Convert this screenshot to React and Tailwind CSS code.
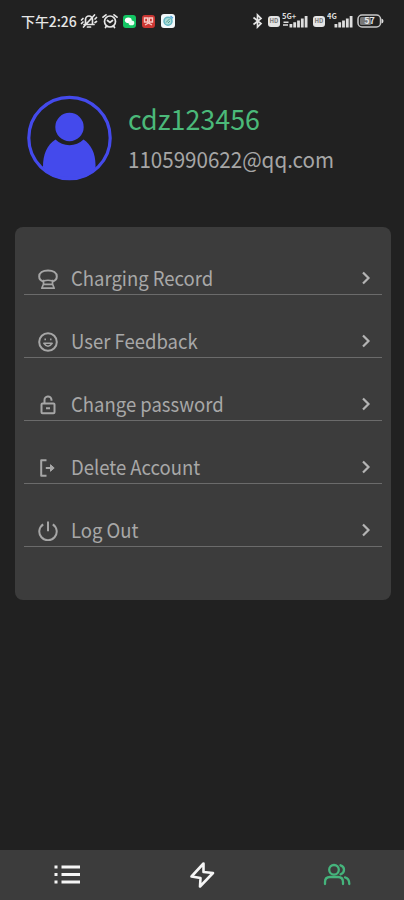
import React from "react";

const FONT = "font-['Noto_Sans_CJK_SC','Noto_Sans',sans-serif]";

function HdBadge() {
  return (
    <span className="flex h-[11px] w-[12px] items-center justify-center rounded-[3px] bg-[#e4e4e4] text-[6px] leading-none font-bold text-[#777]">
      HD
    </span>
  );
}

function Signal({ label, arrows, className }) {
  return (
    <svg className={className} viewBox="0 -4 27 26" fill="#dedede">
      <text x="0" y="6.500" fontSize="7.500" fontWeight="700" fontFamily="Noto Sans CJK SC, sans-serif">
        {label}
      </text>
      {arrows && <path d="M1.500 9.500h5v1.600h-5zM1 12.200h5v1.600H1z" />}
      <path d="M7.500 12h2.800v3.500H7.500zM11.300 10.300h2.800v5.200h-2.800zM15.100 8.500h2.800v7h-2.800zM18.900 6.500h2.800v9h-2.800zM22.700 4h2.800v11.500h-2.800z" />
    </svg>
  );
}

function StatusBar() {
  return (
    <div className="flex h-[42px] items-center pl-[21px] text-[#e6e6e6]">
      <span className="w-[59px] text-[14px] leading-none font-medium tracking-[-0.1px] whitespace-nowrap">下午2:26</span>
      <svg className="h-[16px] w-[18px]" viewBox="0 0 18 16" fill="none" stroke="currentColor" strokeWidth="1.700" strokeLinecap="round">
        <path d="M5.500 11V6.500a3.500 3.500 0 0 1 7 0V11M4 11.500h10M7.500 14h3M14.500 2 3.500 14M1.500 7l1.500-1.500M1.500 10.500 3 9M15 6l1.500-1.500M15 9.500l1.500-1" />
      </svg>
      <svg className="ml-[4px] h-[16px] w-[16px]" viewBox="0 0 16 16" fill="none" stroke="currentColor" strokeWidth="1.700" strokeLinecap="round">
        <circle cx="8" cy="8.500" r="5.500" />
        <path d="M1 4.200 4 1.800M15 4.200l-3-2.400M5.500 7.500 8 9.500l2.500-2M4.500 13l-1 1.500M11.500 13l1 1.500" />
      </svg>
      <svg className="ml-[5px] size-[13px]" viewBox="0 0 13 13">
        <rect width="13" height="13" rx="3" fill="#13c563" />
        <ellipse cx="5.300" cy="5.300" rx="3.400" ry="2.800" fill="#fff" />
        <ellipse cx="8.400" cy="7.900" rx="2.900" ry="2.300" fill="#e9fff2" />
      </svg>
      <svg className="ml-[6px] size-[13px]" viewBox="0 0 13 13">
        <rect width="13" height="13" rx="3" fill="#cc3632" />
        <path d="M2.500 3h3.200v4H2.500zM7.300 3h3.200v4H7.300zM3 10l3.500-2L10 10" fill="none" stroke="#f8c9c4" strokeWidth="1.400" />
      </svg>
      <svg className="ml-[6px] size-[14px]" viewBox="0 0 14 14">
        <rect width="14" height="14" rx="3" fill="#f2f8fa" />
        <circle cx="7" cy="7.200" r="4" fill="#a9dcd7" stroke="#62b6c4" strokeWidth="1.500" />
        <path d="M5 8.500 8.500 5M7 9l2-2" stroke="#559d8f" />
        <path d="M9.500 2 12 4.200" stroke="#4da2e0" strokeWidth="1.300" />
      </svg>
      <svg className="ml-[77px] h-[16px] w-[11px]" viewBox="0 0 11 16" fill="none" stroke="currentColor" strokeWidth="1.700">
        <path d="m1.500 4.500 7.500 6-3.500 3.500V2L9 5.500l-7.500 6" />
      </svg>
      <span className="ml-[5px]">
        <HdBadge />
      </span>
      <Signal label="5G+" arrows className="ml-[2px] h-[26px] w-[27px]" />
      <span className="ml-[4px]">
        <HdBadge />
      </span>
      <Signal label="4G" className="ml-[2px] h-[26px] w-[27px]" />
      <svg className="ml-[3px] h-[14px] w-[27px]" viewBox="0 0 27 14">
        <rect x="1" y="1" width="22.500" height="12" rx="4" fill="none" stroke="#c7c7c7" strokeWidth="1.500" />
        <path d="M24.500 4.500q2 .5 2 2.500t-2 2.500z" fill="#dedede" />
        <rect x="3" y="3" width="11" height="8" rx="1.500" fill="#777" />
        <text x="12.500" y="10.200" textAnchor="middle" fontSize="9" fontWeight="700" fontFamily="Noto Sans CJK SC, sans-serif" fill="#e6e6e6">
          57
        </text>
      </svg>
    </div>
  );
}

function Avatar() {
  return (
    <svg className="size-[86px] shrink-0" viewBox="0 0 86 86">
      <defs>
        <clipPath id="avatar-ring">
          <circle cx="43.500" cy="43" r="42" />
        </clipPath>
      </defs>
      <g clipPath="url(#avatar-ring)" fill="#444aec">
        <path d="M29.500 44.500a20 20 0 0 0 28 0C65.500 50 70 59 69.500 72L60 86H28L17 72C17 59 21 50 29.500 44.500z" />
      </g>
      <circle cx="43.500" cy="32" r="14.200" fill="#444aec" />
      <circle cx="43.500" cy="43" r="40.700" fill="none" stroke="#444aec" strokeWidth="3.200" />
    </svg>
  );
}

const ICONS = {
  record: (
    <>
      <path d="M5.500 12.500C2.700 11.800 1.200 9.900 1.200 7.500c0-3.500 3.500-6 8.800-6s8.800 2.500 8.800 6c0 2.400-1.500 4.300-4.300 5" />
      <path d="M5.500 10.800v4.200l-1.700 4.200h12.400L14.500 15v-4.200M5.500 12q4.500-1.500 9 0M5.500 15.300h9" strokeWidth="1.700" />
    </>
  ),
  feedback: (
    <>
      <circle cx="10" cy="10" r="8.800" />
      <path d="M5.800 11.300q4.200 5.800 8.400 0zM7.200 6.500v1.700M12.800 6.500v1.700" strokeWidth="1.500" />
    </>
  ),
  password: (
    <>
      <rect x="3.500" y="8.500" width="13" height="9.700" rx="1" />
      <path d="M6.500 8.300V5.200a3.500 3.500 0 0 1 7-.5v1M8 13.200h4" />
    </>
  ),
  remove: (
    <>
      <path d="M8.500 2.200H3.200v15.600h5.300M7.800 10h7" />
      <path d="M12.500 6.700 16.200 10l-3.700 3.300z" fill="#a6a6a6" strokeWidth="1" />
    </>
  ),
  logout: <path d="M10 .5v9.800M5.200 3.300a8.700 8.700 0 1 0 9.600 0" />,
};

const ROWS = [
  ["record", "Charging Record"],
  ["feedback", "User Feedback"],
  ["password", "Change password"],
  ["remove", "Delete Account"],
  ["logout", "Log Out"],
];

function MenuRow({ icon, label }) {
  return (
    <div className="flex h-[63px] items-end border-b border-[#6b6b6b] pr-[11px] pb-[5px] pl-[14px]">
      <svg className="size-[20px] shrink-0" viewBox="0 0 20 20" fill="none" stroke="#a6a6a6" strokeWidth="2" strokeLinejoin="round">
        {ICONS[icon]}
      </svg>
      <span className="ml-[13px] flex-1 origin-left scale-x-[0.925] text-[20px] leading-[22px] whitespace-nowrap text-[#a8a8a8]">
        {label}
      </span>
      <svg className="mb-[4px] h-[14px] w-[10px]" viewBox="0 0 10 14" fill="none" stroke="#b4b4b4" strokeWidth="2.200">
        <path d="m2 1.500 5.500 5.500L2 12.500" />
      </svg>
    </div>
  );
}

function TabBar() {
  return (
    <nav className="grid h-[50px] grid-cols-3 items-center justify-items-center bg-[#3c3c3c]">
      <svg className="h-[22px] w-[28px]" viewBox="0 0 28 22" fill="#f5f5f5">
        <path d="M1.500 1.500h3v3h-3zM8.500 1.500H27v3H8.500zM1.500 9h3v3h-3zM8.500 9H27v3H8.500zM1.500 16.500h3v3h-3zM8.500 16.500H27v3H8.500z" />
      </svg>
      <svg className="h-[28px] w-[26px]" viewBox="0 0 26 28" fill="none" stroke="#f5f5f5" strokeWidth="2.600" strokeLinejoin="round">
        <path d="M14.500 2.500 2.500 15.500l9 1.500-.5 8.500L24 12l-9.500-1z" />
      </svg>
      <svg className="h-[24px] w-[28px]" viewBox="0 0 28 24" fill="none" stroke="#45b47c" strokeWidth="2.300" strokeLinecap="round">
        <circle cx="11" cy="6.800" r="4.800" />
        <path d="M2 21v-2c0-3 2-5 5-5h8c3 0 5 2 5 5v2M17.500 2.300q3.500 1 3.500 4.500t-3.500 4.500M22 14.300c3 .7 4.300 2.700 4.300 6.700" />
      </svg>
    </nav>
  );
}

export default function App() {
  return (
    <div className={`flex h-[900px] w-[404px] flex-col overflow-hidden bg-[#212121] ${FONT}`}>
      <StatusBar />
      <header className="flex h-[185px] pt-[53px] pl-[26px]">
        <Avatar />
        <div className="ml-[16px] pt-[4px]">
          <div className="origin-left scale-x-[0.96] text-[28px] leading-[38px] whitespace-nowrap text-[#4bb979]">cdz123456</div>
          <div className="mt-[7px] origin-left scale-x-[0.935] text-[22px] leading-[28px] whitespace-nowrap text-[#a6a6a6]">
            1105990622@qq.com
          </div>
        </div>
      </header>
      <main className="mr-[13px] ml-[15px] h-[373px] rounded-[8px] bg-[#3c3c3c] px-[9px] pt-[5px]">
        {ROWS.map(([icon, label]) => (
          <MenuRow key={icon} icon={icon} label={label} />
        ))}
      </main>
      <div className="flex-1" />
      <TabBar />
    </div>
  );
}
